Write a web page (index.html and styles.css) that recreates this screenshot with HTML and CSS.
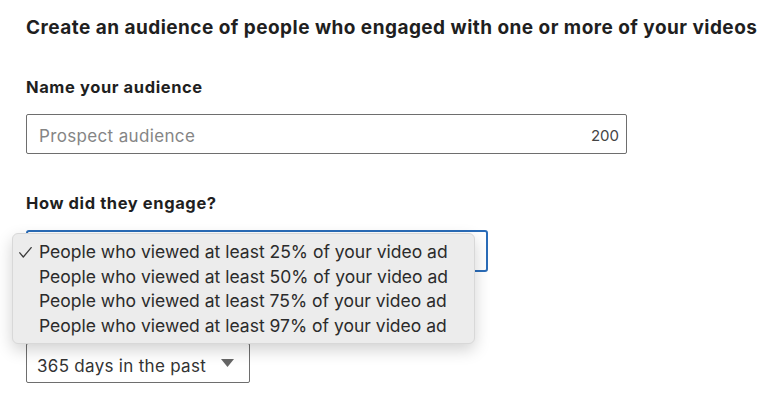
FILE: index.html
```html
<!DOCTYPE html>
<html>
<head>
<meta charset="utf-8">
<link rel="stylesheet" href="styles.css">
</head>
<body>
<main class="page">
  <h1 class="title">Create an audience of people who engaged with one or more of your videos</h1>
  <section class="field">
    <h2 class="label">Name your audience</h2>
    <div class="text-input">
      <span class="placeholder">Prospect audience</span>
      <span class="counter">200</span>
    </div>
  </section>
  <section class="field field-engage">
    <h2 class="label">How did they engage?</h2>
    <div class="select-wrap">
      <div class="select-focused"></div>
      <ul class="menu">
        <li class="menu-item checked"><span class="check"><svg width="13" height="11" viewBox="0 0 13 11"><polyline points="0.8,5.8 4.3,10 12.2,0.6" fill="none" stroke="#3a3a3a" stroke-width="1.3" stroke-linecap="round" stroke-linejoin="round"/></svg></span>People who viewed at least 25% of your video ad</li>
        <li class="menu-item"><span class="check"></span>People who viewed at least 50% of your video ad</li>
        <li class="menu-item"><span class="check"></span>People who viewed at least 75% of your video ad</li>
        <li class="menu-item"><span class="check"></span>People who viewed at least 97% of your video ad</li>
      </ul>
    </div>
    <div class="select-days">
      <span class="days-text">365 days in the past</span>
      <svg class="caret" width="13" height="8" viewBox="0 0 13 8"><path d="M0 0 H13 L6.5 8 Z" fill="#666"/></svg>
    </div>
  </section>
</main>
</body>
</html>
```
FILE: styles.css
```css
html, body {
  margin: 0;
  padding: 0;
  background: #ffffff;
}
body {
  font-family: Inter, "Liberation Sans", Arial, sans-serif;
  color: #1d1d1d;
}
.page {
  padding: 17px 0 0 26px;
}
.title {
  margin: 0;
  font-size: 19px;
  font-weight: 700;
  line-height: 22px;
  letter-spacing: 0.46px;
  color: #1f1f1f;
}
.label {
  margin: 0;
  font-size: 16.5px;
  font-weight: 700;
  line-height: 20px;
  letter-spacing: 0.6px;
  color: #1f1f1f;
}
.field {
  margin-top: 38px;
}
.field .label {
  margin-bottom: 17px;
}
.text-input {
  box-sizing: border-box;
  width: 601px;
  height: 40px;
  border: 1px solid #6e6e6e;
  border-radius: 2px;
  display: flex;
  align-items: center;
  justify-content: space-between;
  padding: 3px 7px 0 12px;
  font-size: 17px;
}
.placeholder {
  color: #858585;
  letter-spacing: 0.35px;
}
.counter {
  font-size: 15px;
  color: #444;
}
.field-engage {
  margin-top: 39px;
}
.field-engage .label {
  margin-bottom: 0;
}
.select-wrap {
  position: relative;
  margin-top: 17px;
}
.select-focused {
  box-sizing: border-box;
  width: 462px;
  height: 42px;
  border: 2px solid #2a6cb8;
  border-radius: 3px;
}
.menu {
  position: absolute;
  left: -14px;
  top: 3px;
  width: 463px;
  box-sizing: border-box;
  margin: 0;
  padding: 5px 0 5px 0;
  list-style: none;
  background: #ececec;
  border: 1px solid #d8d8d8;
  border-radius: 6px;
  box-shadow: 0 6px 16px rgba(0,0,0,0.18);
  z-index: 2;
}
.menu-item {
  display: flex;
  align-items: center;
  height: 24.7px;
  font-size: 17.5px;
  color: #2b2b2b;
}
.check {
  width: 26px;
  padding-left: 6px;
  box-sizing: border-box;
  display: flex;
  align-items: center;
  padding-top: 2px;
}
.check svg {
  display: block;
}
.select-days {
  box-sizing: border-box;
  width: 224px;
  height: 40px;
  margin-top: 71px;
  border: 1px solid #6e6e6e;
  border-radius: 2px;
  display: flex;
  align-items: center;
  justify-content: space-between;
  padding: 0 15px 0 10px;
  font-size: 17px;
  letter-spacing: 0.3px;
  color: #333;
}
.days-text {
  padding-top: 5px;
}
.caret {
  display: block;
}
```
